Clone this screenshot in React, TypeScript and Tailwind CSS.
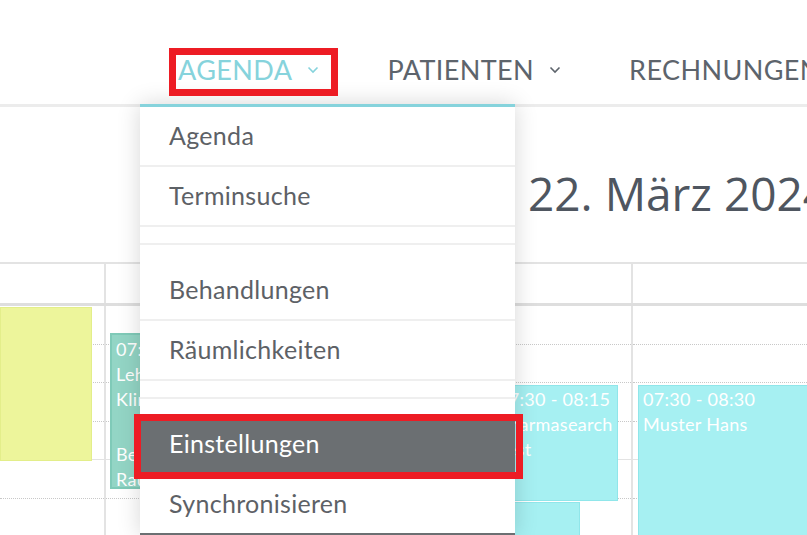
import React from "react";

// small thin chevron used in the top navigation
function Chevron({ className = "" }: { className?: string }) {
  return (
    <svg width="12" height="8" viewBox="0 0 12 8" className={className} fill="none">
      <path d="M1.5 1.5 L6 6 L10.5 1.5" stroke="currentColor" strokeWidth="1.6" />
    </svg>
  );
}

function NavItem({ label, active = false, chevron = true }: { label: string; active?: boolean; chevron?: boolean }) {
  return (
    <div className={`flex items-center gap-[15px] ${active ? "text-[#86d3dc]" : "text-[#5d646c]"}`}>
      <span className="text-[27px] leading-none tracking-[0.4px]">{label}</span>
      {chevron && <Chevron className="mt-[2px]" />}
    </div>
  );
}

function MenuItem({ label, active = false }: { label: string; active?: boolean }) {
  return (
    <div
      className={`flex h-[58px] items-center pl-[29px] text-[25px] tracking-[0.3px] ${
        active ? "bg-[#6b6f72] text-white" : "text-[#5d6166]"
      }`}
    >
      {label}
    </div>
  );
}

function Line() {
  return <div className="h-[2px] bg-[#efefef]" />;
}

function Spacer() {
  return <div className="h-[16px]" />;
}

const slots = [0, 1, 2, 3, 4, 5];

// one column of quarter-hour slots, solid line on the hour
function SlotColumn({ children, last = false }: { children?: React.ReactNode; last?: boolean }) {
  return (
    <div className={`relative ${last ? "" : "border-r-2 border-[#e3e3e3]"}`}>
      {slots.map((s) => (
        <div
          key={s}
          className={`h-[38.5px] border-b ${
            s === 3 ? "border-solid border-[#e3e3e3]" : "border-dotted border-[#c8c8c8]"
          }`}
        />
      ))}
      {children}
    </div>
  );
}

export default function App() {
  return (
    <div className="relative h-[535px] w-[807px] overflow-hidden bg-white font-['Lato',sans-serif]">
      {/* Top navigation */}
      <header className="flex h-[107px] items-center gap-[68px] border-b-[3px] border-[#ececec] pl-[178px] pt-[34px] whitespace-nowrap">
        <NavItem label="AGENDA" active />
        <NavItem label="PATIENTEN" />
        <NavItem label="RECHNUNGEN" chevron={false} />
      </header>

      {/* Date title */}
      <div className="flex h-[155px] items-center pl-[528px] pt-[18px] whitespace-nowrap font-['Open_Sans',sans-serif] text-[46px] text-[#4f5660]">
        22. März 2024
      </div>

      {/* Calendar grid */}
      <div className="border-t-2 border-[#e3e3e3]">
        <div className="grid h-[42px] grid-cols-[106px_527px_1fr] border-b-[3px] border-[#dedede]">
          <div className="border-r-2 border-[#e3e3e3]" />
          <div className="border-r-2 border-[#e3e3e3]" />
          <div />
        </div>
        <div className="grid grid-cols-[106px_527px_1fr] text-[18px] leading-[25px] tracking-[0.3px] text-white">
          <SlotColumn>
            <div className="absolute left-0 top-[1px] h-[154px] w-[92px] border border-[#e3ee8a] bg-[#edf59b]" />
          </SlotColumn>
          <SlotColumn>
            <div className="absolute left-[4px] top-[27px] h-[156px] w-[180px] border-2 border-[#7fcab8] bg-[#93d5c5] px-[4px] pt-[2px]">
              <div>07:10 - 08:10</div>
              <div>Lehmann Petra</div>
              <div>Klinik</div>
              <div className="h-[25px]" />
              <div className="pt-[5px]">Beratung</div>
              <div>Raum 1</div>
            </div>
            <div className="absolute left-[387px] top-[79px] h-[116px] w-[125px] border border-[#90e6ea] bg-[#a6f0f2] px-[4px] pt-[1px]">
              <div>07:30 - 08:15</div>
              <div>Pharmasearch</div>
              <div>Test</div>
            </div>
            <div className="absolute left-[387px] top-[196px] h-[60px] w-[87px] border border-[#90e6ea] bg-[#a6f0f2]" />
          </SlotColumn>
          <SlotColumn last>
            <div className="absolute left-[5px] top-[79px] h-[200px] w-[200px] border border-[#90e6ea] bg-[#a6f0f2] px-[4px] pt-[1px]">
              <div>07:30 - 08:30</div>
              <div>Muster Hans</div>
            </div>
          </SlotColumn>
        </div>
      </div>

      {/* Open dropdown menu */}
      <div className="absolute left-[140px] top-[104px] w-[375px] border-t-[3px] border-[#86d3dc] bg-white shadow-[0_0_22px_rgba(0,0,0,0.16)]">
        <MenuItem label="Agenda" />
        <Line />
        <MenuItem label="Terminsuche" />
        <Line />
        <Spacer />
        <Line />
        <Spacer />
        <MenuItem label="Behandlungen" />
        <Line />
        <MenuItem label="Räumlichkeiten" />
        <Line />
        <Spacer />
        <Line />
        <Spacer />
        <MenuItem label="Einstellungen" active />
        <Line />
        <MenuItem label="Synchronisieren" />
        <div className="h-[3px] bg-[#6b6f72]" />
      </div>

      {/* Red annotation frames */}
      <div className="absolute left-[169px] top-[48px] h-[48px] w-[169px] border-[7px] border-[#ed1c24]" />
      <div className="absolute left-[134px] top-[414px] h-[65px] w-[389px] border-[7px] border-[#ed1c24]" />
    </div>
  );
}
